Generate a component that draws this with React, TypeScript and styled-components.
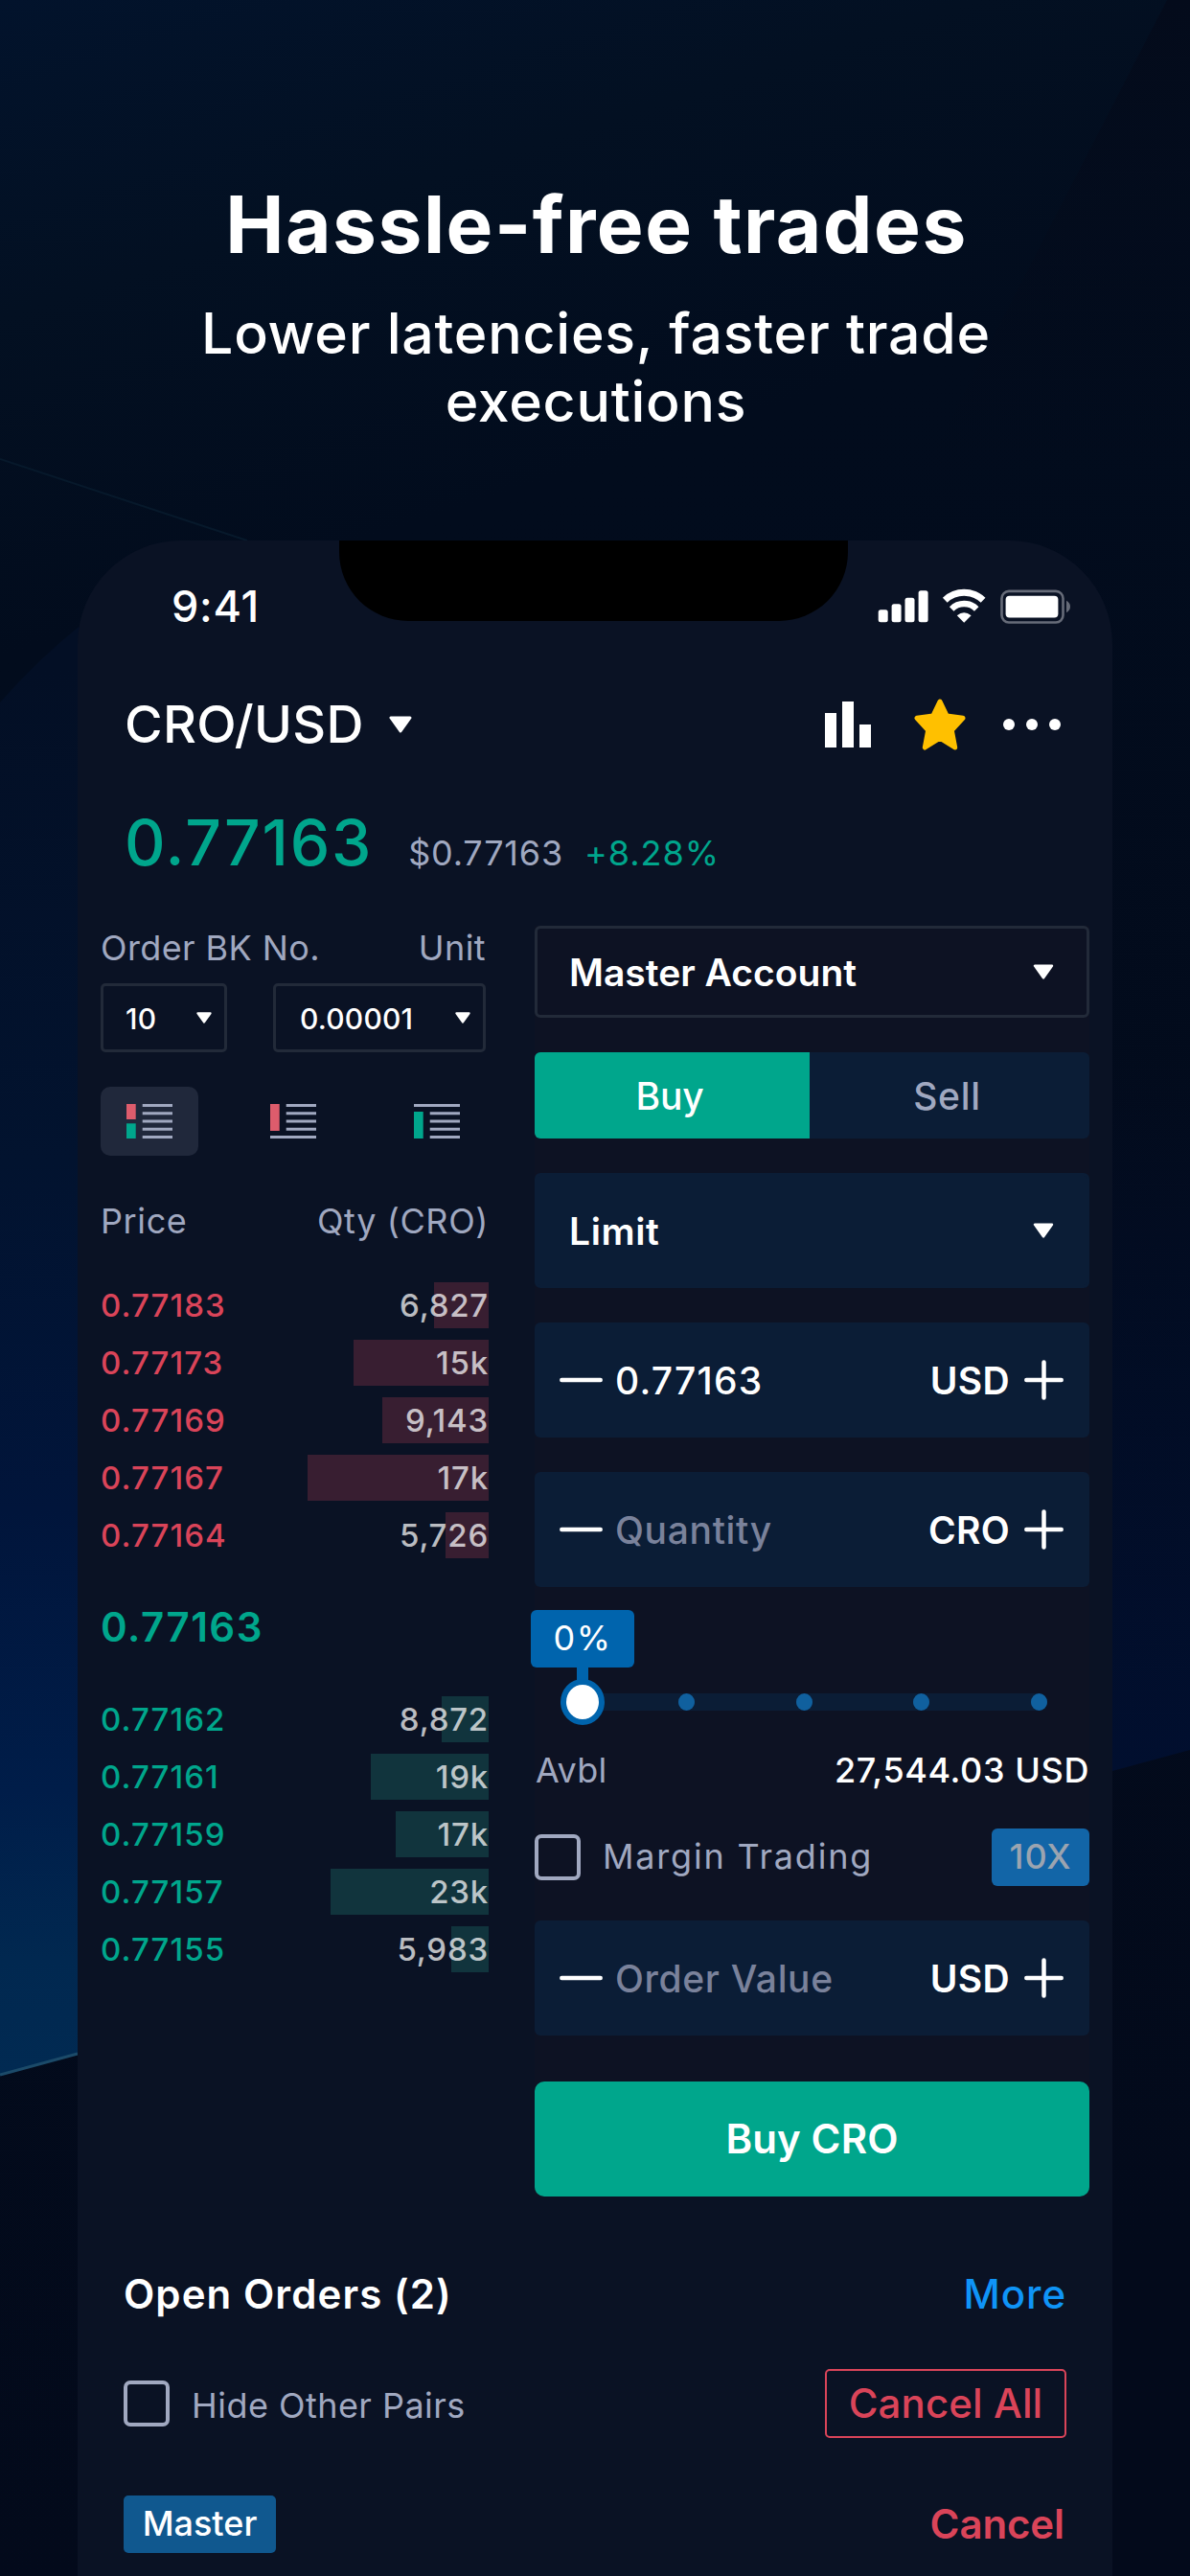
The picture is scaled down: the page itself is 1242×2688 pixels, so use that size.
import React from 'react';
import styled, { createGlobalStyle } from 'styled-components';

const GlobalStyle = createGlobalStyle`
    * {
        box-sizing: border-box;
    }

    body {
        margin: 0;
        background-color: #030b1c;
        color: #ffffff;
        font-family: Inter, "Liberation Sans", sans-serif;
    }
`;

const green = '#00a68c';
const red = '#da4459';
const muted = '#a0a8c0';
const field = '#0b1d36';

/* ---------- page ---------- */

const Page = styled.div`
    position: relative;
    display: flex;
    flex-direction: column;
    align-items: center;
    width: 1242px;
    height: 2688px;
    padding-top: 187px;
    overflow: hidden;
`;

const Backdrop = styled.svg`
    position: absolute;
    top: 0;
    left: 0;
    z-index: -1;
`;

const Headline = styled.h1`
    margin: 0 0 29px 0;
    padding-left: 3px;
    font-size: 82px;
    font-weight: 700;
    line-height: 96px;
    letter-spacing: 1.5px;
`;

const Subtitle = styled.p`
    margin: 0 0 110px 0;
    padding-left: 2px;
    width: 900px;
    text-align: center;
    font-size: 59px;
    font-weight: 500;
    line-height: 71px;
    letter-spacing: 0.75px;
`;

const Phone = styled.main`
    position: relative;
    display: flex;
    flex-direction: column;
    width: 1080px;
    flex: 1;
    border-radius: 108px 108px 0 0;
    background-color: #0a1224;
`;

const Notch = styled.div`
    position: absolute;
    top: 0;
    left: 273px;
    width: 531px;
    height: 84px;
    border-radius: 0 0 72px 72px;
    background-color: #000000;
`;

const StatusBar = styled.div`
    display: flex;
    align-items: center;
    justify-content: space-between;
    height: 136px;
    padding: 0 43px 0 98px;
    font-size: 45px;
    font-weight: 500;
    letter-spacing: 0.7px;
`;

/* ---------- header ---------- */

const Header = styled.header`
    display: flex;
    align-items: center;
    height: 112px;
    padding: 0 54px 0 49px;
`;

const PairName = styled.span`
    margin-right: 26px;
    padding-bottom: 2px;
    font-size: 54px;
    font-weight: 500;
    letter-spacing: 0.3px;
`;

const HeaderIcons = styled.div`
    display: flex;
    align-items: center;
    margin-left: auto;

    svg:nth-child(2) {
        margin: 0 39px 0 45px;
    }
`;

const PriceRow = styled.div`
    display: flex;
    align-items: baseline;
    height: 84px;
    margin: 25px 0 45px 0;
    padding-left: 49px;
    line-height: 84px;
`;

const LastPrice = styled.span`
    margin-right: 37px;
    font-size: 66px;
    font-weight: 500;
    letter-spacing: 1.78px;
    color: ${green};
`;

const FiatPrice = styled.span`
    margin-right: 22px;
    font-size: 36px;
    letter-spacing: 0.8px;
    color: ${muted};
`;

const Change = styled.span`
    font-size: 36px;
    letter-spacing: 1px;
    color: ${green};
`;

/* ---------- order book ---------- */

const Trade = styled.div`
    display: flex;
    gap: 48px;
    padding: 0 24px;
`;

const OrderBook = styled.section`
    width: 405px;
    padding-top: 1px;
`;

const LabelRow = styled.div`
    display: flex;
    justify-content: space-between;
    margin-right: 3px;
    font-size: 36px;
    line-height: 44px;
    letter-spacing: 0.4px;
    color: ${muted};
`;

const ColumnHeads = styled(LabelRow)`
    margin: 46px 0 42px 0;
    letter-spacing: 0.6px;
`;

const BookSelects = styled.div`
    display: flex;
    justify-content: space-between;
    margin: 15px 3px 36px 0;
`;

const SmallSelect = styled.div<{ $width: number; $left: number }>`
    display: flex;
    align-items: center;
    justify-content: space-between;
    width: ${(p) => p.$width}px;
    height: 72px;
    padding: 0 13px 0 ${(p) => p.$left}px;
    border: 3px solid #222a39;
    border-radius: 5px;
    font-size: 30px;
    font-weight: 500;
    letter-spacing: 0.2px;

    span {
        padding-top: 1px;
    }
`;

const BookTabs = styled.div`
    display: flex;
    gap: 48px;
`;

const BookTab = styled.div<{ $active?: boolean }>`
    display: flex;
    align-items: center;
    justify-content: center;
    width: 102px;
    height: 72px;
    border-radius: 10px;
    background-color: ${(p) => (p.$active ? '#20283b' : 'transparent')};
`;

const Depth = styled.div`
    display: flex;
    flex-direction: column;
    gap: 12px;
`;

const DepthRow = styled.div`
    position: relative;
    display: flex;
    align-items: center;
    justify-content: space-between;
    height: 48px;
    font-size: 33px;
    font-weight: 500;
`;

const DepthBar = styled.div<{ $side: Side }>`
    position: absolute;
    top: 0;
    right: 0;
    height: 48px;
    background-color: ${(p) => (p.$side === 'ask' ? '#381e31' : '#11343d')};
`;

const DepthPrice = styled.span<{ $side: Side }>`
    letter-spacing: 1.06px;
    color: ${(p) => (p.$side === 'ask' ? red : green)};
`;

const DepthQty = styled.span`
    position: relative;
    letter-spacing: 0.8px;
    color: rgba(255, 255, 255, 0.73);
`;

const MidPrice = styled.div`
    height: 144px;
    font-size: 42px;
    font-weight: 600;
    line-height: 144px;
    letter-spacing: 1.47px;
    color: ${green};
`;

/* ---------- order form ---------- */

const Form = styled.section`
    display: flex;
    flex-direction: column;
    width: 579px;
    background-color: #0d1223;
`;

const Select = styled.div<{ $filled?: boolean }>`
    display: flex;
    align-items: center;
    justify-content: space-between;
    height: ${(p) => (p.$filled ? 120 : 96)}px;
    padding: 0 34px 0 33px;
    border: 3px solid ${(p) => (p.$filled ? field : '#222a39')};
    border-radius: 6px;
    background-color: ${(p) => (p.$filled ? field : 'transparent')};
    font-size: 39px;
    font-weight: 600;
    letter-spacing: ${(p) => (p.$filled ? 0.6 : 0)}px;
`;

const Toggle = styled.div`
    display: flex;
    height: 90px;
    margin: 36px 0;
    border-radius: 6px;
    background-color: ${field};
    overflow: hidden;
`;

const ToggleSide = styled.div<{ $active?: boolean }>`
    display: flex;
    align-items: center;
    justify-content: center;
    width: ${(p) => (p.$active ? 287 : 292)}px;
    padding: 1px 5px 0 0;
    background-color: ${(p) => (p.$active ? green : 'transparent')};
    font-size: 39px;
    font-weight: 500;
    letter-spacing: ${(p) => (p.$active ? -0.1 : 0.7)}px;
    color: ${(p) => (p.$active ? '#ffffff' : muted)};
`;

const Stepper = styled.div`
    display: flex;
    align-items: center;
    height: 120px;
    margin-top: 36px;
    padding: 0 27px 0 26px;
    border-radius: 6px;
    background-color: ${field};
    font-size: 39px;
    font-weight: 500;
`;

const StepperValue = styled.span<{ $placeholder?: boolean }>`
    flex: 1;
    padding: 1px 0 0 13px;
    letter-spacing: ${(p) => (p.$placeholder ? 0.65 : 1.25)}px;
    color: ${(p) => (p.$placeholder ? '#7a829b' : '#ffffff')};
`;

const StepperUnit = styled.span`
    padding: 1px 15px 0 0;
    font-weight: 600;
    letter-spacing: 0.3px;
`;

const Slider = styled.div`
    position: relative;
    height: 120px;
    margin-top: 24px;
    padding: 87px 44px 0 50px;
`;

const SliderTrack = styled.div`
    display: flex;
    justify-content: space-between;
    height: 18px;
    padding-left: 100px;
    border-radius: 9px;
    background-color: ${field};
`;

const SliderStop = styled.div`
    width: 17px;
    height: 18px;
    border-radius: 50%;
    background-color: #10609e;
`;

const SliderTip = styled.div`
    position: absolute;
    top: 0;
    left: -4px;
    width: 108px;
    height: 60px;
    border-radius: 6px;
    background-color: #0064ad;
    text-align: center;
    font-size: 36px;
    line-height: 58px;
    letter-spacing: 1.5px;

    &::after {
        content: '';
        position: absolute;
        top: 58px;
        left: 48px;
        width: 12px;
        height: 20px;
        background-color: #0064ad;
    }
`;

const SliderThumb = styled.div`
    position: absolute;
    top: 72px;
    left: 27px;
    width: 46px;
    height: 48px;
    border: 6px solid #0064ad;
    border-radius: 50%;
    background-color: #ffffff;
`;

const Available = styled.div`
    display: flex;
    justify-content: space-between;
    margin: 25px 0 39px 0;
    padding-left: 1px;
    font-size: 36px;
    line-height: 44px;
    letter-spacing: 0.2px;
    color: ${muted};

    strong {
        font-weight: 500;
        letter-spacing: 0.6px;
        color: #ffffff;
    }
`;

const CheckRow = styled.div`
    display: flex;
    align-items: center;
`;

const Checkbox = styled.div`
    width: 48px;
    height: 48px;
    margin-right: 23px;
    border: 4.5px solid ${muted};
    border-radius: 7px;
`;

const CheckLabel = styled.span`
    padding-bottom: 2px;
    font-size: 36px;
    letter-spacing: 1.8px;
    color: ${muted};
`;

const FilterLabel = styled(CheckLabel)`
    padding: 3px 0 0 0;
    letter-spacing: 0.46px;
`;

const Leverage = styled.div`
    width: 102px;
    height: 60px;
    margin-left: auto;
    border-radius: 6px;
    background-color: #1265a7;
    text-align: center;
    font-size: 36px;
    font-weight: 500;
    line-height: 58px;
    letter-spacing: 0.9px;
    color: #9ba4b0;
`;

const SubmitButton = styled.div`
    height: 120px;
    margin-top: 48px;
    border-radius: 10px;
    background-color: ${green};
    text-align: center;
    font-size: 42px;
    font-weight: 600;
    line-height: 120px;
    letter-spacing: 0.1px;
`;

/* ---------- open orders ---------- */

const OpenOrders = styled.section`
    margin-top: 72px;
    padding: 0 48px;
`;

const OrdersRow = styled.div<{ $top?: number }>`
    display: flex;
    align-items: center;
    justify-content: space-between;
    margin-top: ${(p) => p.$top || 0}px;
`;

const OrdersTitle = styled.h2`
    margin: 0;
    font-size: 42px;
    font-weight: 600;
    line-height: 60px;
    letter-spacing: 1.08px;
`;

const MoreLink = styled.span`
    font-size: 42px;
    font-weight: 500;
    line-height: 60px;
    letter-spacing: 0.9px;
    color: #0f94f7;
`;

const CancelAll = styled.div`
    width: 252px;
    height: 72px;
    border: 2px solid ${red};
    border-radius: 5px;
    text-align: center;
    font-size: 42px;
    font-weight: 500;
    line-height: 67px;
    letter-spacing: 0.1px;
    color: ${red};
`;

const AccountTag = styled.div`
    width: 159px;
    height: 60px;
    border-radius: 5px;
    background-color: #10588f;
    text-align: center;
    font-size: 36px;
    font-weight: 500;
    line-height: 58px;
`;

const CancelLink = styled.span`
    margin-right: 2px;
    font-size: 42px;
    font-weight: 600;
    line-height: 60px;
    letter-spacing: -0.1px;
    color: ${red};
`;

/* ---------- icons ---------- */

interface CaretProps {
    width: number;
    height: number;
}

function Caret({ width, height }: CaretProps) {
    return (
        <svg width={width} height={height} viewBox="0 0 24 18">
            <path d="M2 2H22L12 16Z" fill="#fff" stroke="#fff" strokeWidth="3" strokeLinejoin="round" />
        </svg>
    );
}

function StatusIcons() {
    return (
        <svg width="202" height="40" viewBox="0 0 202 40" fill="#fff">
            <rect x="0.7" y="24.3" width="10" height="13" rx="2.5" />
            <rect x="14.6" y="18.3" width="10" height="19" rx="2.5" />
            <rect x="28.5" y="11.7" width="10" height="25.6" rx="2.5" />
            <rect x="42.6" y="4.3" width="10" height="33" rx="2.5" />
            <path d="M70.3 14.2A29 29 0 0 1 110.1 14.2" fill="none" stroke="#fff" strokeWidth="7" />
            <path d="M77.2 23.4A18.4 18.4 0 0 1 103.2 23.4" fill="none" stroke="#fff" strokeWidth="6.4" />
            <path d="M90.2 37.8L82.8 30.3Q90.2 24 97.6 30.3Z" />
            <rect x="129.5" y="4.9" width="64" height="32.6" rx="7.5" fill="none" stroke="#666b78" strokeWidth="2.6" />
            <rect x="133.6" y="9.7" width="54.8" height="22.8" rx="4" />
            <path d="M197 14.8Q201 17 201 21T197 27.2Z" fill="#666b78" />
        </svg>
    );
}

function ChartIcon() {
    return (
        <svg width="48" height="48" viewBox="0 0 48 48" fill="#fff">
            <rect x="0" y="12" width="12" height="36" />
            <rect x="18" y="0" width="12" height="48" />
            <rect x="36" y="24" width="12" height="24" />
        </svg>
    );
}

function StarIcon() {
    return (
        <svg width="54" height="54" viewBox="0 0 54 54">
            <path
                d="M27 3L34.2 18L51 20.3L39.3 33L42.7 51L27 41.2L11.3 51L14.7 33L3 20.3L19.8 18Z"
                fill="#ffc000"
                stroke="#ffc000"
                strokeWidth="5"
                strokeLinejoin="round"
            />
        </svg>
    );
}

function DotsIcon() {
    return (
        <svg width="60" height="12" viewBox="0 0 60 12" fill="#fff">
            <circle cx="6" cy="6" r="6" />
            <circle cx="30" cy="6" r="6" />
            <circle cx="54" cy="6" r="6" />
        </svg>
    );
}

const lineTops = [0, 8.25, 16.5, 24.75, 33];

interface BookIconProps {
    view: 'both' | 'asks' | 'bids';
}

function BookIcon({ view }: BookIconProps) {
    const wideLine = view === 'asks' ? 33 : view === 'bids' ? 0 : -1;
    return (
        <svg width="48" height="36" viewBox="0 0 48 36">
            {lineTops.map((y) => {
                const x = y === wideLine ? 0 : 16.7;
                return <rect key={y} x={x} y={y} width={48 - x} height="3" fill={muted} />;
            })}
            {view === 'both' && <rect width="9.7" height="16" fill="#dd5c6c" />}
            {view === 'both' && <rect y="20.3" width="9.7" height="15.7" fill={green} />}
            {view === 'asks' && <rect width="9.7" height="28" fill="#dd5c6c" />}
            {view === 'bids' && <rect y="8" width="9.7" height="28" fill={green} />}
        </svg>
    );
}

function MinusIcon() {
    return (
        <svg width="45" height="42" viewBox="0 0 45 42" stroke="#fff" strokeWidth="4.5" strokeLinecap="round">
            <path d="M2.3 21H42.7" />
        </svg>
    );
}

function PlusIcon() {
    return (
        <svg width="41" height="42" viewBox="0 0 41 42" stroke="#fff" strokeWidth="4.5" strokeLinecap="round">
            <path d="M2.3 21H38.7M20.5 2.5V39.5" />
        </svg>
    );
}

function Background() {
    return (
        <Backdrop width="1242" height="2688" viewBox="0 0 1242 2688">
            <defs>
                <linearGradient id="sky" x1="0" y1="0" x2="0.15" y2="1">
                    <stop offset="0" stopColor="#02132c" />
                    <stop offset="0.12" stopColor="#031022" />
                    <stop offset="0.25" stopColor="#020c1d" />
                    <stop offset="1" stopColor="#030a1b" />
                </linearGradient>
                <linearGradient id="corner" x1="0" y1="0" x2="0" y2="1">
                    <stop offset="0" stopColor="#040b1b" />
                    <stop offset="1" stopColor="#040b1b" stopOpacity="0" />
                </linearGradient>
                <linearGradient id="glow" gradientUnits="userSpaceOnUse" x1="0" y1="700" x2="30" y2="2160">
                    <stop offset="0" stopColor="#030f25" />
                    <stop offset="0.35" stopColor="#02132f" />
                    <stop offset="0.6" stopColor="#01153b" />
                    <stop offset="0.8" stopColor="#001d49" />
                    <stop offset="0.92" stopColor="#012850" />
                    <stop offset="1" stopColor="#012a52" />
                </linearGradient>
                <linearGradient id="side" gradientUnits="userSpaceOnUse" x1="0" y1="1100" x2="0" y2="1850">
                    <stop offset="0" stopColor="#010f30" stopOpacity="0" />
                    <stop offset="1" stopColor="#010f2f" />
                </linearGradient>
            </defs>
            <rect width="1242" height="2688" fill="url(#sky)" />
            <path d="M1218 0H1242V500H960Z" fill="url(#corner)" />
            <path d="M0 479L258 564" stroke="#07192b" strokeWidth="2" />
            <path d="M0 733Q40 688 81 655L200 600V2110L81 2143L0 2165Z" fill="url(#glow)" />
            <path d="M0 2165L81 2143" stroke="#1b4a69" strokeWidth="3" />
            <path d="M1100 1100H1242V1826L1161 1848L1100 1862Z" fill="url(#side)" />
        </Backdrop>
    );
}

/* ---------- data ---------- */

type Side = 'ask' | 'bid';

interface Level {
    price: string;
    qty: string;
    depth: number;
}

const asks: Level[] = [
    { price: '0.77183', qty: '6,827', depth: 57 },
    { price: '0.77173', qty: '15k', depth: 141 },
    { price: '0.77169', qty: '9,143', depth: 111 },
    { price: '0.77167', qty: '17k', depth: 189 },
    { price: '0.77164', qty: '5,726', depth: 45 },
];

const bids: Level[] = [
    { price: '0.77162', qty: '8,872', depth: 49 },
    { price: '0.77161', qty: '19k', depth: 123 },
    { price: '0.77159', qty: '17k', depth: 97 },
    { price: '0.77157', qty: '23k', depth: 165 },
    { price: '0.77155', qty: '5,983', depth: 39 },
];

interface DepthListProps {
    side: Side;
    levels: Level[];
}

function DepthList({ side, levels }: DepthListProps) {
    return (
        <Depth>
            {levels.map((level) => (
                <DepthRow key={level.price}>
                    <DepthBar $side={side} style={{ width: level.depth }} />
                    <DepthPrice $side={side}>{level.price}</DepthPrice>
                    <DepthQty>{level.qty}</DepthQty>
                </DepthRow>
            ))}
        </Depth>
    );
}

interface StepperFieldProps {
    value?: string;
    placeholder?: string;
    unit: string;
}

function StepperField({ value, placeholder, unit }: StepperFieldProps) {
    return (
        <Stepper>
            <MinusIcon />
            <StepperValue $placeholder={!value}>{value || placeholder}</StepperValue>
            <StepperUnit>{unit}</StepperUnit>
            <PlusIcon />
        </Stepper>
    );
}

function App() {
    return (
        <Page>
            <GlobalStyle />
            <Background />
            <Headline>Hassle-free trades</Headline>
            <Subtitle>Lower latencies, faster trade executions</Subtitle>
            <Phone>
                <Notch />
                <StatusBar>
                    <span>9:41</span>
                    <StatusIcons />
                </StatusBar>
                <Header>
                    <PairName>CRO/USD</PairName>
                    <Caret width={24} height={18} />
                    <HeaderIcons>
                        <ChartIcon />
                        <StarIcon />
                        <DotsIcon />
                    </HeaderIcons>
                </Header>
                <PriceRow>
                    <LastPrice>0.77163</LastPrice>
                    <FiatPrice>$0.77163</FiatPrice>
                    <Change>+8.28%</Change>
                </PriceRow>
                <Trade>
                    <OrderBook>
                        <LabelRow>
                            <span>Order BK No.</span>
                            <span>Unit</span>
                        </LabelRow>
                        <BookSelects>
                            <SmallSelect $width={132} $left={23}>
                                <span>10</span>
                                <Caret width={16} height={12} />
                            </SmallSelect>
                            <SmallSelect $width={222} $left={25}>
                                <span>0.00001</span>
                                <Caret width={16} height={12} />
                            </SmallSelect>
                        </BookSelects>
                        <BookTabs>
                            <BookTab $active>
                                <BookIcon view="both" />
                            </BookTab>
                            <BookTab>
                                <BookIcon view="asks" />
                            </BookTab>
                            <BookTab>
                                <BookIcon view="bids" />
                            </BookTab>
                        </BookTabs>
                        <ColumnHeads>
                            <span>Price</span>
                            <span>Qty (CRO)</span>
                        </ColumnHeads>
                        <DepthList side="ask" levels={asks} />
                        <MidPrice>0.77163</MidPrice>
                        <DepthList side="bid" levels={bids} />
                    </OrderBook>
                    <Form>
                        <Select>
                            <span>Master Account</span>
                            <Caret width={22} height={16} />
                        </Select>
                        <Toggle>
                            <ToggleSide $active>Buy</ToggleSide>
                            <ToggleSide>Sell</ToggleSide>
                        </Toggle>
                        <Select $filled>
                            <span>Limit</span>
                            <Caret width={22} height={16} />
                        </Select>
                        <StepperField value="0.77163" unit="USD" />
                        <StepperField placeholder="Quantity" unit="CRO" />
                        <Slider>
                            <SliderTrack>
                                <SliderStop />
                                <SliderStop />
                                <SliderStop />
                                <SliderStop />
                            </SliderTrack>
                            <SliderTip>0%</SliderTip>
                            <SliderThumb />
                        </Slider>
                        <Available>
                            <span>Avbl</span>
                            <strong>27,544.03 USD</strong>
                        </Available>
                        <CheckRow>
                            <Checkbox />
                            <CheckLabel>Margin Trading</CheckLabel>
                            <Leverage>10X</Leverage>
                        </CheckRow>
                        <StepperField placeholder="Order Value" unit="USD" />
                        <SubmitButton>Buy CRO</SubmitButton>
                    </Form>
                </Trade>
                <OpenOrders>
                    <OrdersRow>
                        <OrdersTitle>Open Orders (2)</OrdersTitle>
                        <MoreLink>More</MoreLink>
                    </OrdersRow>
                    <OrdersRow $top={48}>
                        <CheckRow>
                            <Checkbox />
                            <FilterLabel>Hide Other Pairs</FilterLabel>
                        </CheckRow>
                        <CancelAll>Cancel All</CancelAll>
                    </OrdersRow>
                    <OrdersRow $top={60}>
                        <AccountTag>Master</AccountTag>
                        <CancelLink>Cancel</CancelLink>
                    </OrdersRow>
                </OpenOrders>
            </Phone>
        </Page>
    );
}

export default App;
